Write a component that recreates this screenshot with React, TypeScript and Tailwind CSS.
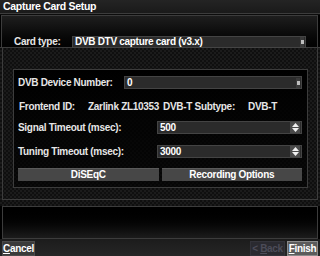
import React from 'react';

const pattern =
  'bg-[image:repeating-conic-gradient(#1b1b1b_0%_25%,#0f0f0f_0%_50%)] bg-[length:4px_4px]';

function ScrollMark() {
  return (
    <div className="w-[4px] h-[10px] bg-[#3a3a3a] flex items-center justify-center mr-[1px]">
      <div className="w-[3px] h-[4px] bg-[#bdbdbd]" />
    </div>
  );
}

function Spinner() {
  return (
    <div className="w-[10px] h-[11px] bg-[#4a4a4a] flex flex-col items-center justify-center gap-[1px] mr-[1px]">
      <svg width="7" height="4" viewBox="0 0 7 4">
        <path d="M3.5 0 L7 4 L0 4 Z" fill="#f0f0f0" />
      </svg>
      <svg width="7" height="4" viewBox="0 0 7 4">
        <path d="M0 0 L7 0 L3.5 4 Z" fill="#f0f0f0" />
      </svg>
    </div>
  );
}

function Field({ value, spin }: { value: string; spin?: boolean }) {
  return (
    <div className="h-[13px] flex-1 bg-[#2b2b2b] border border-[#444] flex items-center justify-between pl-[2px]">
      <span className="text-white">{value}</span>
      {spin ? <Spinner /> : <ScrollMark />}
    </div>
  );
}

function Button({ label, className }: { label: React.ReactNode; className: string }) {
  return (
    <div className={`h-[15px] flex items-center justify-center border border-[#4a4a4a] whitespace-nowrap ${className}`}>
      {label}
    </div>
  );
}

export default function App() {
  return (
    <div className="w-[320px] h-[256px] bg-black flex flex-col overflow-hidden whitespace-nowrap font-['Liberation_Sans',Arial,sans-serif] font-bold text-[10px] tracking-[-0.3px] leading-none text-[#e6e6e6]">
      {/* Title */}
      <div className="h-[14px] shrink-0 bg-gradient-to-b from-[#242424] to-[#1a1a1a] border-b border-[#3c3c3c] pl-[3px] flex items-center text-white text-[10.5px]">
        Capture Card Setup
      </div>
      <div className="h-[1px] shrink-0 bg-[#0c0c0c]" />

      {/* Card type */}
      <div className="h-[32px] shrink-0 ml-[1px] mr-[2px] border-t border-x border-[#3c3c3c] bg-gradient-to-b from-[#1e1e1e] to-[#020202] flex items-end">
        <div className="flex items-center w-full -mb-[1px] relative z-10">
          <span className="w-[70px] shrink-0 pl-[12px]">Card type:</span>
          <div className="h-[12px] w-[234px] bg-[#2b2b2b] border border-[#444] flex items-center justify-between pl-[2px]">
            <span className="text-white">DVB DTV capture card (v3.x)</span>
            <ScrollMark />
          </div>
        </div>
      </div>

      {/* Main */}
      <div className={`h-[159px] shrink-0 border-t border-[#3c3c3c] flex flex-col ${pattern}`}>
        <div className="h-[152px] mx-[2px] border-x border-b border-[#3c3c3c] pt-[21px] pl-[10px]">
          <div className="w-[295px] h-[119px] border border-[#3c3c3c] bg-gradient-to-b from-black to-black/60 flex flex-col pl-[4px] pr-[5px]">
            <div className="flex items-center h-[13px] mt-[6px]">
              <span className="w-[106px] shrink-0">DVB Device Number:</span>
              <Field value="0" />
            </div>
            <div className="flex items-center h-[13px] mt-[11px] pl-[1px]">
              <span className="w-[69px] shrink-0">Frontend ID:</span>
              <span className="w-[75px] shrink-0">Zarlink ZL10353</span>
              <span className="w-[85px] shrink-0">DVB-T Subtype:</span>
              <span>DVB-T</span>
            </div>
            <div className="flex items-center h-[13px] mt-[8px]">
              <span className="w-[139px] shrink-0">Signal Timeout (msec):</span>
              <Field value="500" spin />
            </div>
            <div className="flex items-center h-[13px] mt-[11px]">
              <span className="w-[139px] shrink-0">Tuning Timeout (msec):</span>
              <Field value="3000" spin />
            </div>
            <div className="flex h-[13px] mt-[10px] gap-[3px]">
              <div className="flex-1 bg-[#474747] border-t border-[#5a5a5a] flex items-center justify-center text-white">
                DiSEqC
              </div>
              <div className="flex-1 bg-[#474747] border-t border-[#5a5a5a] flex items-center justify-center text-white">
                Recording Options
              </div>
            </div>
          </div>
        </div>
      </div>

      {/* Help area */}
      <div className="h-[33px] shrink-0 mx-[2px] border border-[#3c3c3c] bg-gradient-to-b from-black to-[#1c1c1c]" />

      {/* Buttons */}
      <div className="h-[17px] shrink-0 bg-gradient-to-b from-[#1c1c1c] to-[#262626] flex items-end px-[2px]">
        <Button
          className="w-[33px] bg-[#3a3a3a] text-white"
          label={<><span className="underline">C</span>ancel</>}
        />
        <div className="flex-1" />
        <Button
          className="w-[35px] bg-[#2a2a30] border-[#33333a] text-[#4c4c58] mr-[2px]"
          label={<>&lt;&nbsp;<span className="underline">B</span>ack</>}
        />
        <Button
          className="w-[31px] bg-[#5c5c5c] border-[#8a8a8a] text-white"
          label={<><span className="underline">F</span>inish</>}
        />
      </div>
    </div>
  );
}
